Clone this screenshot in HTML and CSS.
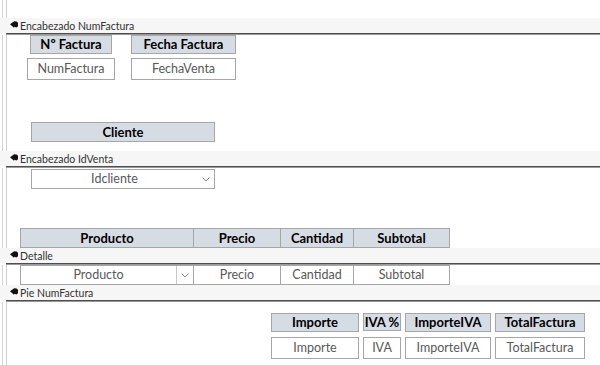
FILE: index.html
```html
<!DOCTYPE html>
<html lang="es">
<head>
    <meta charset="UTF-8">
    <title>Informe Factura - Vista Diseño</title>
    <link rel="stylesheet" href="styles.css">
</head>
<body>
    <div class="page">
        <div class="sec sec-top"></div>

        <div class="band">
            <div class="band-bar">
                <svg class="sel" width="8" height="7" viewBox="0 0 8 7"><path d="M0 3.3 L4.2 0.2 L6.6 0.4 L8 1.8 L8 5.2 L6.4 6.6 L4.6 5.8 L4 6.8 Z" fill="#111"/></svg>
                <span>Encabezado NumFactura</span>
            </div>
            <div class="band-line"></div>
        </div>
        <div class="sec sec-factura">
            <div class="row-heads">
                <div class="lbl lbl-num">Nº Factura</div>
                <div class="lbl lbl-fecha">Fecha Factura</div>
            </div>
            <div class="row-fields">
                <div class="txt txt-num">NumFactura</div>
                <div class="txt txt-fecha">FechaVenta</div>
            </div>
            <div class="lbl lbl-cliente">Cliente</div>
        </div>

        <div class="band">
            <div class="band-bar">
                <svg class="sel" width="8" height="7" viewBox="0 0 8 7"><path d="M0 3.3 L4.2 0.2 L6.6 0.4 L8 1.8 L8 5.2 L6.4 6.6 L4.6 5.8 L4 6.8 Z" fill="#111"/></svg>
                <span>Encabezado IdVenta</span>
            </div>
            <div class="band-line"></div>
        </div>
        <div class="sec sec-venta">
            <div class="combo combo-cliente">
                <span class="combo-text">Idcliente</span>
                <span class="combo-btn"><svg width="8" height="5" viewBox="0 0 8 5"><polyline points="0.5,0.5 4,4 7.5,0.5" fill="none" stroke="#8a8a8a" stroke-width="1"/></svg></span>
            </div>
            <div class="cols">
                <div class="lbl col-prod">Producto</div>
                <div class="lbl col-precio">Precio</div>
                <div class="lbl col-cant">Cantidad</div>
                <div class="lbl col-sub">Subtotal</div>
            </div>
        </div>

        <div class="band">
            <div class="band-bar">
                <svg class="sel" width="8" height="7" viewBox="0 0 8 7"><path d="M0 3.3 L4.2 0.2 L6.6 0.4 L8 1.8 L8 5.2 L6.4 6.6 L4.6 5.8 L4 6.8 Z" fill="#111"/></svg>
                <span>Detalle</span>
            </div>
            <div class="band-line"></div>
        </div>
        <div class="sec sec-detalle">
            <div class="cols">
                <div class="combo col-prod split">
                    <span class="combo-text">Producto</span>
                    <span class="combo-btn"><svg width="8" height="5" viewBox="0 0 8 5"><polyline points="0.5,0.5 4,4 7.5,0.5" fill="none" stroke="#8a8a8a" stroke-width="1"/></svg></span>
                </div>
                <div class="txt col-precio">Precio</div>
                <div class="txt col-cant">Cantidad</div>
                <div class="txt col-sub">Subtotal</div>
            </div>
        </div>

        <div class="band">
            <div class="band-bar">
                <svg class="sel" width="8" height="7" viewBox="0 0 8 7"><path d="M0 3.3 L4.2 0.2 L6.6 0.4 L8 1.8 L8 5.2 L6.4 6.6 L4.6 5.8 L4 6.8 Z" fill="#111"/></svg>
                <span>Pie NumFactura</span>
            </div>
            <div class="band-line"></div>
        </div>
        <div class="sec sec-pie">
            <div class="totals">
                <div class="lbl">Importe</div>
                <div class="lbl lbl-iva">IVA %</div>
                <div class="lbl">ImporteIVA</div>
                <div class="lbl">TotalFactura</div>
                <div class="txt">Importe</div>
                <div class="txt">IVA</div>
                <div class="txt">ImporteIVA</div>
                <div class="txt">TotalFactura</div>
            </div>
        </div>
    </div>
</body>
</html>
```

FILE: styles.css
```css
* {
    box-sizing: border-box;
}
body {
    margin: 0;
    background-color: white;
    font-family: Lato, 'Liberation Sans', sans-serif;
}
.page {
    width: 600px;
    height: 365px;
    overflow: hidden;
}

/* sections with the little ruler lines on the left */
.sec {
    background: linear-gradient(to right, transparent 2px, #d4d4d4 2px, #d4d4d4 3px, transparent 3px, transparent 6px, #cfcfcf 6px, #cfcfcf 7px, transparent 7px);
    overflow: hidden;
}
.sec-top { height: 18px; }
.sec-factura { height: 116px; }
.sec-venta { height: 80px; }
.sec-detalle { height: 20px; }
.sec-pie { height: 63px; }

/* band headers */
.band-bar {
    height: 15px;
    background-color: #f6f6f6;
    display: flex;
    align-items: center;
    padding-left: 10px;
    font-size: 10.5px;
    color: #333;
}
.band-bar .sel {
    margin-right: 2px;
    margin-top: -2px;
}
.band-line {
    margin-left: 6px;
    height: 2px;
    border-top: 1px solid #4e4e4e;
    border-bottom: 1px solid #9a9a9a;
}

/* controls */
.lbl {
    background-color: #d6dce4;
    border: 1px solid #a6a6a6;
    font-weight: bold;
    font-size: 13px;
    color: #000;
    text-align: center;
    height: 19px;
    line-height: 17px;
}
.txt {
    background-color: white;
    border: 1px solid #a6a6a6;
    font-size: 12.5px;
    color: #595959;
    text-align: center;
    height: 22px;
    line-height: 20px;
}
.combo {
    display: flex;
    border: 1px solid #a6a6a6;
    background-color: white;
    font-size: 12.5px;
    color: #595959;
    height: 20px;
}
.combo-text {
    flex: 1;
    text-align: center;
    line-height: 18px;
}
.combo-btn {
    width: 17px;
    display: flex;
    align-items: center;
    justify-content: center;
}
.split .combo-btn {
    border-left: 1px solid #c8c8c8;
}

/* Encabezado NumFactura */
.row-heads {
    display: flex;
    padding-left: 30px;
}
.lbl-num { width: 82px; }
.lbl-fecha { width: 105px; margin-left: 19px; }
.row-fields {
    display: flex;
    margin-top: 4px;
    padding-left: 27px;
}
.txt-num { width: 88px; }
.txt-fecha { width: 105px; margin-left: 16px; }
.lbl-cliente {
    width: 184px;
    height: 20px;
    line-height: 18px;
    margin: 42px 0 0 31px;
}

/* Encabezado IdVenta */
.combo-cliente {
    width: 184px;
    margin: 1px 0 0 31px;
}
.cols {
    display: flex;
    padding-left: 20px;
}
.sec-venta .cols { margin-top: 39px; }
.cols .lbl { height: 20px; line-height: 18px; }
.cols .txt { height: 20px; line-height: 18px; }
.cols > div + div { margin-left: -1px; }
.col-prod { width: 174px; }
.col-precio { width: 88px; }
.col-cant { width: 74px; }
.col-sub { width: 97px; }

/* Pie NumFactura */
.totals {
    display: grid;
    grid-template-columns: 88px 38px 86px 90px;
    column-gap: 4px;
    row-gap: 5px;
    margin: 11px 0 0 271px;
}
.lbl-iva {
    height: 18px;
    line-height: 16px;
}
```
